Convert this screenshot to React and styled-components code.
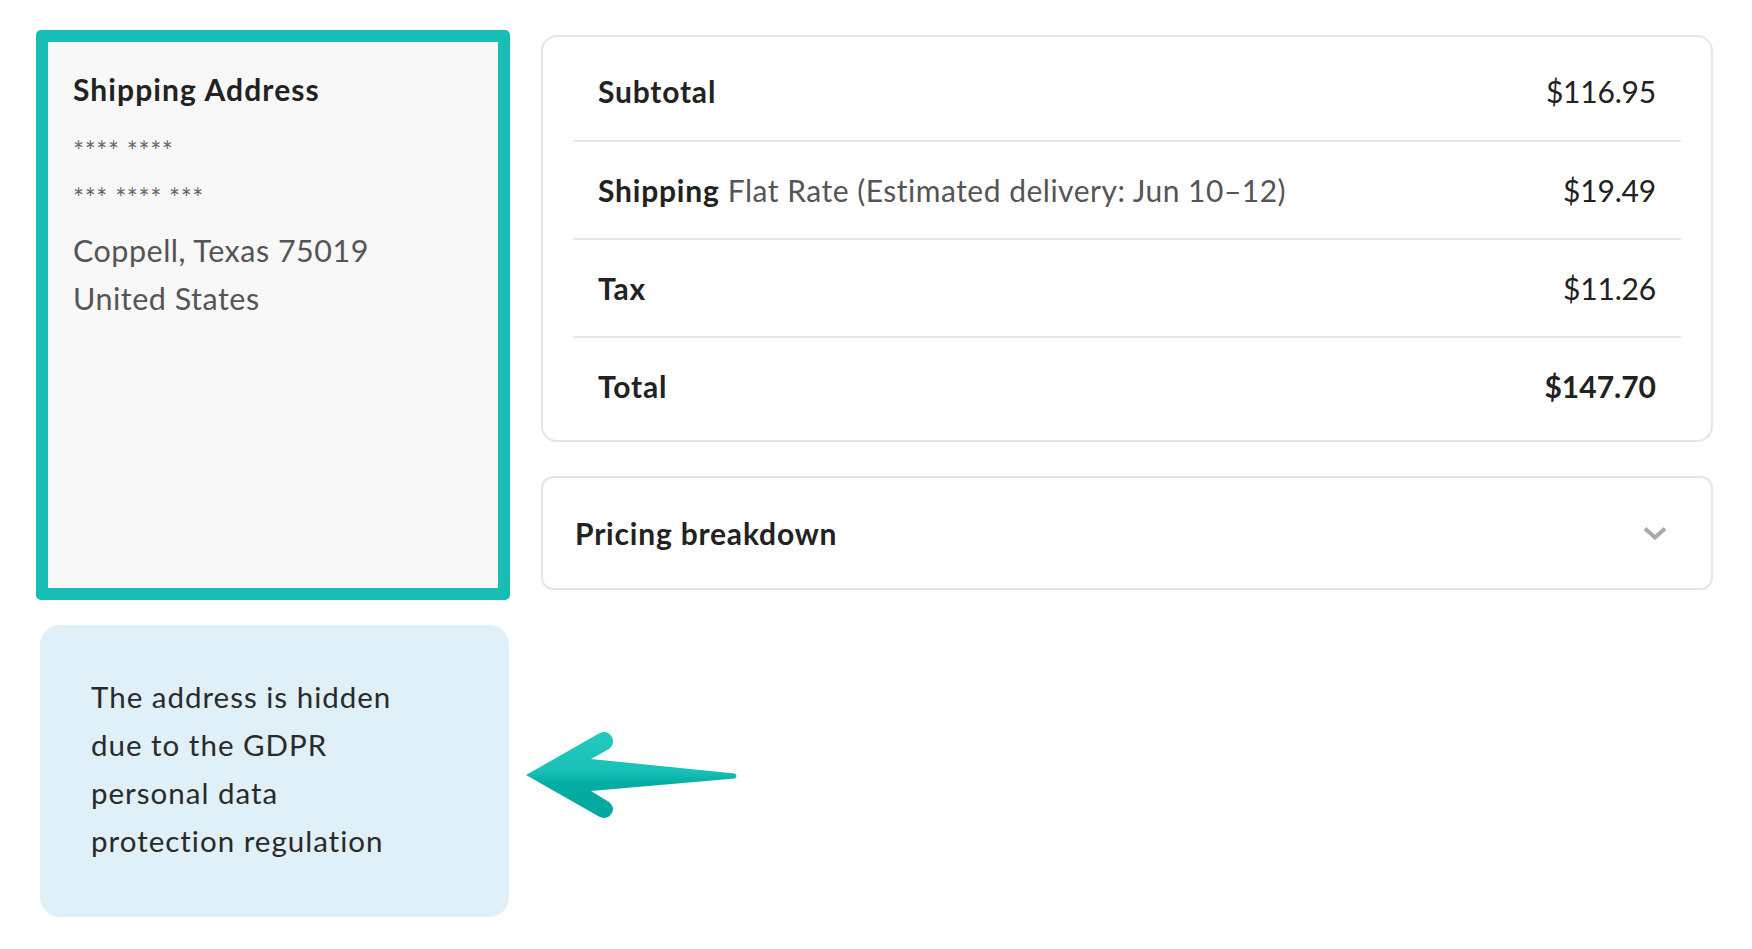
import React from "react";
import styled, { createGlobalStyle } from "styled-components";

const GlobalStyle = createGlobalStyle`
  html, body {
    margin: 0;
    padding: 0;
    background: #ffffff;
  }
  body {
    font-family: Lato, "Open Sans", "Liberation Sans", sans-serif;
    color: #222222;
  }
`;

const Page = styled.div`
  display: flex;
  align-items: flex-start;
  gap: 31px;
  padding: 30px 0 0 36px;
  width: 1752px;
  height: 949px;
  box-sizing: border-box;
`;

const LeftColumn = styled.div`
  width: 474px;
  display: flex;
  flex-direction: column;
`;

const AddressCard = styled.div`
  height: 570px;
  box-sizing: border-box;
  border: 12px solid #18bdb6;
  border-radius: 5px;
  background: #f8f8f8;
  padding: 29px 20px 0 25px;
`;

const CardTitle = styled.h3`
  margin: 0 0 18px 0;
  font-size: 30px;
  line-height: 36px;
  font-weight: 700;
  letter-spacing: 1.1px;
  color: #222;
`;

const Masked = styled.div`
  font-size: 26px;
  line-height: 42px;
  padding-top: 5px;
  color: #666;
  letter-spacing: 0.6px;
`;

const AddressLine = styled.div`
  font-size: 30.5px;
  line-height: 48px;
  letter-spacing: 0.5px;
  color: #555;
  margin-top: ${(p) => (p.$first ? "7px" : "0")};
`;

const NoteRow = styled.div`
  display: flex;
  align-items: center;
  margin-top: 25px;
`;

const Note = styled.div`
  flex: 0 0 469px;
  margin-left: 4px;
  box-sizing: border-box;
  height: 292px;
  padding: 48px 20px 0 51px;
  background: #dff0f8;
  border-radius: 20px;
  font-size: 29.5px;
  line-height: 48px;
  letter-spacing: 1px;
  color: #2a2a2a;
`;

const NoteLine = styled.span`
  display: block;
  white-space: nowrap;
`;

const ArrowIcon = styled.svg`
  flex: 0 0 auto;
  margin-left: 16px;
  margin-top: 8px;
  overflow: visible;
`;

const RightColumn = styled.div`
  width: 1172px;
  padding-top: 5px;
  display: flex;
  flex-direction: column;
  gap: 34px;
`;

const TotalsPanel = styled.div`
  border: 2px solid #e5e5e5;
  border-radius: 16px;
  padding: 5px 30px 6px;
  background: #fff;
`;

const TotalRow = styled.div`
  display: flex;
  justify-content: space-between;
  align-items: center;
  height: 98px;
  padding: 0 25px;
  font-size: 30px;
  border-top: ${(p) => (p.$first ? "none" : "2px solid #e6e6e6")};
  box-sizing: border-box;
`;

const Label = styled.span`
  font-weight: 700;
  letter-spacing: 0.8px;
  color: #222;
`;

const Detail = styled.span`
  font-weight: 400;
  letter-spacing: 0.5px;
  color: #555;
`;

const Amount = styled.span`
  font-weight: ${(p) => (p.$bold ? 700 : 400)};
  letter-spacing: ${(p) => (p.$bold ? "0" : "-0.2px")};
  color: #222;
`;

const BreakdownPanel = styled.button`
  display: flex;
  justify-content: space-between;
  align-items: center;
  height: 114px;
  box-sizing: border-box;
  padding: 0 44px 0 32px;
  border: 2px solid #e5e5e5;
  border-radius: 12px;
  background: #fff;
  font-family: inherit;
  font-size: 30px;
  font-weight: 700;
  letter-spacing: 0.8px;
  color: #222;
  cursor: pointer;
  text-align: left;
`;

const rows = [
  { label: "Subtotal", amount: "$116.95" },
  {
    label: "Shipping",
    detail: "Flat Rate (Estimated delivery: Jun 10–12)",
    amount: "$19.49",
  },
  { label: "Tax", amount: "$11.26" },
  { label: "Total", amount: "$147.70", bold: true },
];

const noteLines = [
  "The address is hidden",
  "due to the GDPR",
  "personal data",
  "protection regulation",
];

const Arrow = () => (
  <ArrowIcon width="213" height="90" viewBox="0 0 213 90">
    <defs>
      <linearGradient id="arrowFill" x1="0" y1="0" x2="0" y2="1">
        <stop offset="0" stopColor="#22cabe" />
        <stop offset="0.45" stopColor="#19c1b6" />
        <stop offset="0.6" stopColor="#05aca1" />
        <stop offset="1" stopColor="#00a89d" />
      </linearGradient>
    </defs>
    <path
      d="M1 45 L73 4 Q82 -1 87 7 Q90 14 84 19 L66 29 L210 43.5 Q213 46 210 48.5 L66 61 L84 72 Q90 77 87 83 Q82 91 73 86 Z"
      fill="url(#arrowFill)"
    />
  </ArrowIcon>
);

const Chevron = () => (
  <svg width="24" height="15" viewBox="0 0 24 15">
    <path
      d="M2 2.5 L12 11.5 L22 2.5"
      fill="none"
      stroke="#aaaaaa"
      strokeWidth="4"
    />
  </svg>
);

const App = () => {
  return (
    <>
      <GlobalStyle />
      <Page>
        <LeftColumn>
          <AddressCard>
            <CardTitle>Shipping Address</CardTitle>
            <Masked>**** ****</Masked>
            <Masked>*** **** ***</Masked>
            <AddressLine $first>Coppell, Texas 75019</AddressLine>
            <AddressLine>United States</AddressLine>
          </AddressCard>
          <NoteRow>
            <Note>
              {noteLines.map((line) => (
                <NoteLine key={line}>{line}</NoteLine>
              ))}
            </Note>
            <Arrow />
          </NoteRow>
        </LeftColumn>
        <RightColumn>
          <TotalsPanel>
            {rows.map((row, i) => (
              <TotalRow key={row.label} $first={i === 0}>
                <span>
                  <Label>{row.label}</Label>
                  {row.detail && <Detail> {row.detail}</Detail>}
                </span>
                <Amount $bold={row.bold}>{row.amount}</Amount>
              </TotalRow>
            ))}
          </TotalsPanel>
          <BreakdownPanel type="button">
            Pricing breakdown
            <Chevron />
          </BreakdownPanel>
        </RightColumn>
      </Page>
    </>
  );
};

export default App;
